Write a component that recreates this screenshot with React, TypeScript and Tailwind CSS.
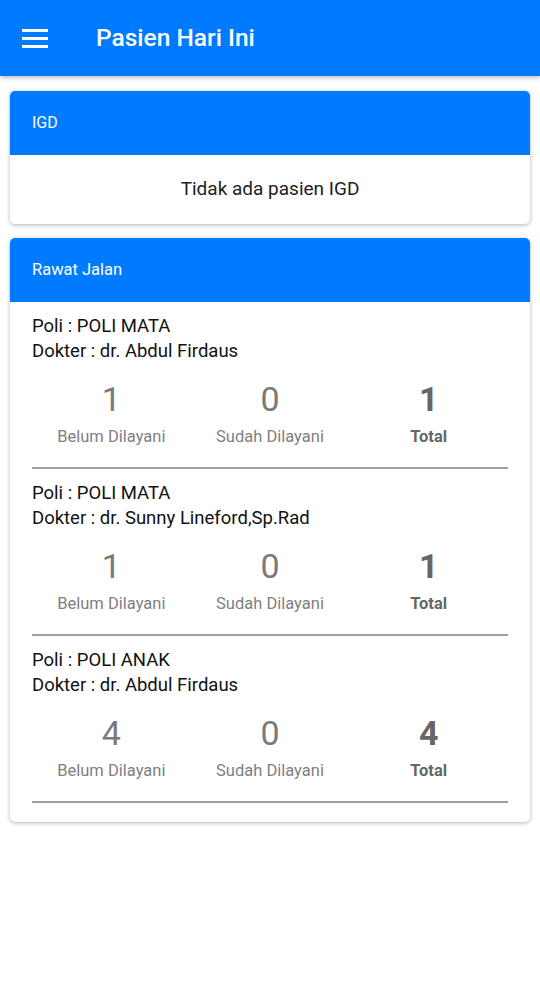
import React from 'react';

const blue = 'bg-[#007bff]';

type Entry = {
  poli: string;
  dokter: string;
  belum: number;
  sudah: number;
  total: number;
};

const entries: Entry[] = [
  { poli: 'POLI MATA', dokter: 'dr. Abdul Firdaus', belum: 1, sudah: 0, total: 1 },
  { poli: 'POLI MATA', dokter: 'dr. Sunny Lineford,Sp.Rad', belum: 1, sudah: 0, total: 1 },
  { poli: 'POLI ANAK', dokter: 'dr. Abdul Firdaus', belum: 4, sudah: 0, total: 4 },
];

const Stat: React.FC<{ value: number; label: string; bold?: boolean }> = ({ value, label, bold }) => (
  <div className="flex flex-col items-center">
    <div
      className={`text-[34px] leading-[40px] ${bold ? 'font-bold text-[#666]' : 'font-normal text-[#7a7a7a]'}`}
    >
      {value}
    </div>
    <div
      className={`mt-2 text-[16.5px] leading-[20px] ${bold ? 'font-bold text-[#666]' : 'text-[#808080]'}`}
    >
      {label}
    </div>
  </div>
);

export default function App() {
  return (
    <div className="min-h-[990px] w-[540px] bg-white font-['Roboto',sans-serif]">
      {/* App bar */}
      <div className={`${blue} flex h-[76px] items-center shadow-[0_2px_4px_rgba(0,0,0,0.25)]`}>
        <div className="ml-[22px] flex w-[26px] flex-col gap-[5px]">
          <span className="h-[3px] bg-white" />
          <span className="h-[3px] bg-white" />
          <span className="h-[3px] bg-white" />
        </div>
        <div className="ml-[48px] text-[24.5px] font-medium text-white">Pasien Hari Ini</div>
      </div>

      <div className="flex flex-col gap-[14px] px-[10px] pt-[15px]">
        {/* IGD */}
        <div className="overflow-hidden rounded-[5px] bg-white shadow-[0_1px_4px_rgba(0,0,0,0.3)]">
          <div className={`${blue} flex h-[64px] items-center px-[22px] text-[16px] text-white`}>IGD</div>
          <div className="flex h-[69px] items-center justify-center text-[19px] text-[#212121]">
            Tidak ada pasien IGD
          </div>
        </div>

        {/* Rawat Jalan */}
        <div className="overflow-hidden rounded-[5px] bg-white pb-[19px] shadow-[0_1px_4px_rgba(0,0,0,0.3)]">
          <div className={`${blue} flex h-[64px] items-center px-[22px] text-[16.5px] text-white`}>
            Rawat Jalan
          </div>
          <div className="px-[22px]">
            {entries.map((e, i) => (
              <div key={i} className="pt-[12px]">
                <div className="text-[18.5px] leading-[25px] text-[#111]">Poli : {e.poli}</div>
                <div className="text-[18.5px] leading-[25px] text-[#111]">Dokter : {e.dokter}</div>
                <div className="mt-[15px] grid grid-cols-3">
                  <Stat value={e.belum} label="Belum Dilayani" />
                  <Stat value={e.sudah} label="Sudah Dilayani" />
                  <Stat value={e.total} label="Total" bold />
                </div>
                <div className="mt-[20px] h-[2px] bg-[#a0a0a0]" />
              </div>
            ))}
          </div>
        </div>
      </div>
    </div>
  );
}
